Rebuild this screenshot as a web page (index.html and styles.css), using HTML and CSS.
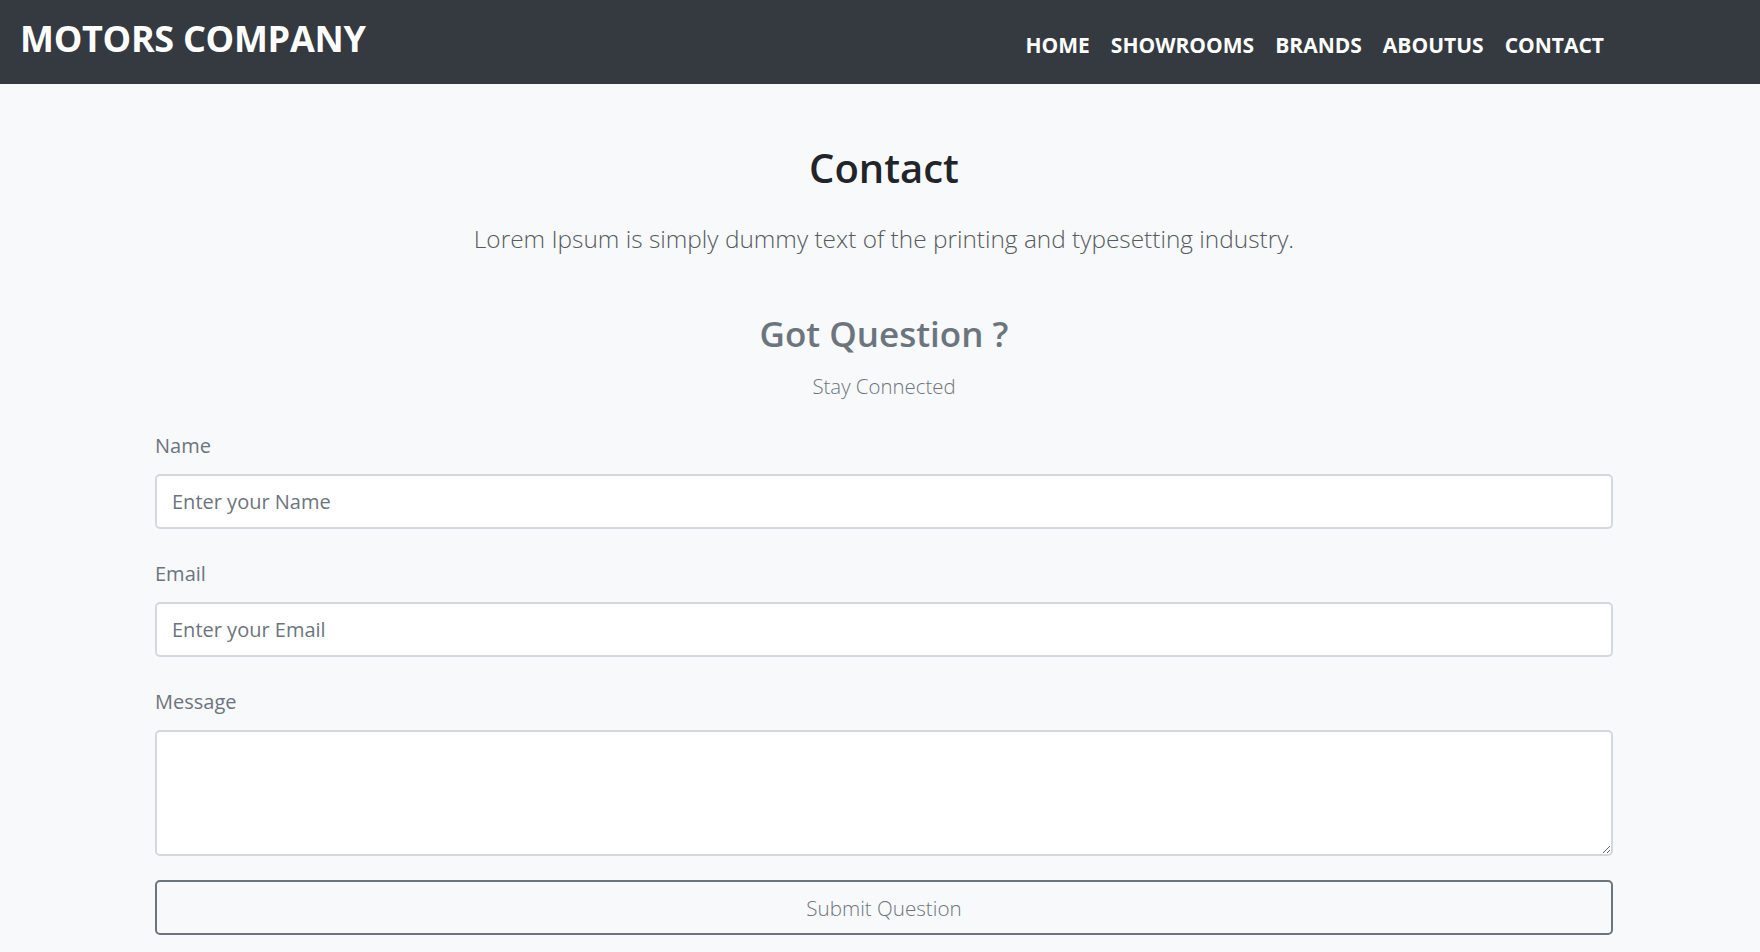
FILE: index.html
```html
<!DOCTYPE html>
<html lang="en">
<head>
<meta charset="utf-8">
<title>Motors Company - Contact</title>
<link rel="stylesheet" href="styles.css">
</head>
<body>
<header class="navbar">
  <a class="brand" href="#">MOTORS COMPANY</a>
  <nav class="nav">
    <a class="nav-link" href="#">HOME</a>
    <a class="nav-link" href="#">SHOWROOMS</a>
    <a class="nav-link" href="#">BRANDS</a>
    <a class="nav-link" href="#">ABOUTUS</a>
    <a class="nav-link" href="#">CONTACT</a>
  </nav>
</header>
<main class="container">
  <h1 class="title">Contact</h1>
  <p class="lead">Lorem Ipsum is simply dummy text of the printing and typesetting industry.</p>
  <h2 class="subtitle">Got Question ?</h2>
  <p class="tagline">Stay Connected</p>
  <form class="form">
    <div class="group">
      <label class="label" for="name">Name</label>
      <input class="field" id="name" type="text" placeholder="Enter your Name">
    </div>
    <div class="group">
      <label class="label" for="email">Email</label>
      <input class="field" id="email" type="email" placeholder="Enter your Email">
    </div>
    <div class="group group-last">
      <label class="label" for="msg">Message</label>
      <textarea class="field area" id="msg"></textarea>
    </div>
    <button class="submit" type="button">Submit Question</button>
  </form>
</main>
</body>
</html>
```
FILE: styles.css
```css
* { box-sizing: border-box; }
html, body { margin: 0; padding: 0; }
body {
  background: #f8f9fa;
  font-family: "Open Sans", "Noto Sans", sans-serif;
  color: #212529;
  min-height: 952px;
}
.navbar {
  height: 84px;
  background: #343a40;
  display: flex;
  align-items: center;
  padding: 0 156px 0 20px;
}
.brand {
  color: #fff;
  text-decoration: none;
  font-weight: 700;
  font-size: 36px;
  font-stretch: 90%;
  line-height: 40px;
  margin-bottom: 6px;
  letter-spacing: -0.3px;
}
.nav {
  margin-left: auto;
  display: flex;
  gap: 21px;
  margin-top: 5px;
}
.nav-link {
  color: #fff;
  text-decoration: none;
  font-weight: 700;
  font-size: 21px;
  font-stretch: 90%;
  line-height: 28px;
}
.container {
  margin: 0 147px 0 155px;
  text-align: center;
}
.title {
  margin: 60px 0 0;
  font-size: 40px;
  line-height: 48px;
  font-weight: 600;
  color: #212529;
}
.lead {
  margin: 32px 0 0;
  font-size: 24.4px;
  line-height: 30px;
  font-weight: 300;
  color: #555b61;
}
.subtitle {
  margin: 60px 0 0;
  font-size: 35px;
  line-height: 40px;
  font-weight: 600;
  color: #6c757d;
}
.tagline {
  margin: 18px 0 0;
  font-size: 20.4px;
  line-height: 28px;
  font-weight: 300;
  color: #6c757d;
}
.form {
  margin-top: 32px;
  text-align: left;
}
.group {
  display: flex;
  flex-direction: column;
  gap: 14px;
  margin-bottom: 31px;
}
.group-last { margin-bottom: 24px; }
.label {
  font-size: 20px;
  line-height: 28px;
  color: #6c757d;
}
.field {
  height: 55px;
  width: 100%;
  padding: 0 15px;
  font-family: inherit;
  font-size: 20px;
  color: #495057;
  background: #fff;
  border: 2px solid #d4d8dc;
  border-radius: 5px;
}
.field::placeholder { color: #6c757d; }
.area {
  height: 126px;
  padding: 10px 15px;
  resize: vertical;
}
.submit {
  display: block;
  width: 100%;
  height: 55px;
  background: transparent;
  border: 2px solid #6c757d;
  border-radius: 5px;
  font-family: inherit;
  font-size: 20.6px;
  font-weight: 300;
  color: #6c757d;
}
```
